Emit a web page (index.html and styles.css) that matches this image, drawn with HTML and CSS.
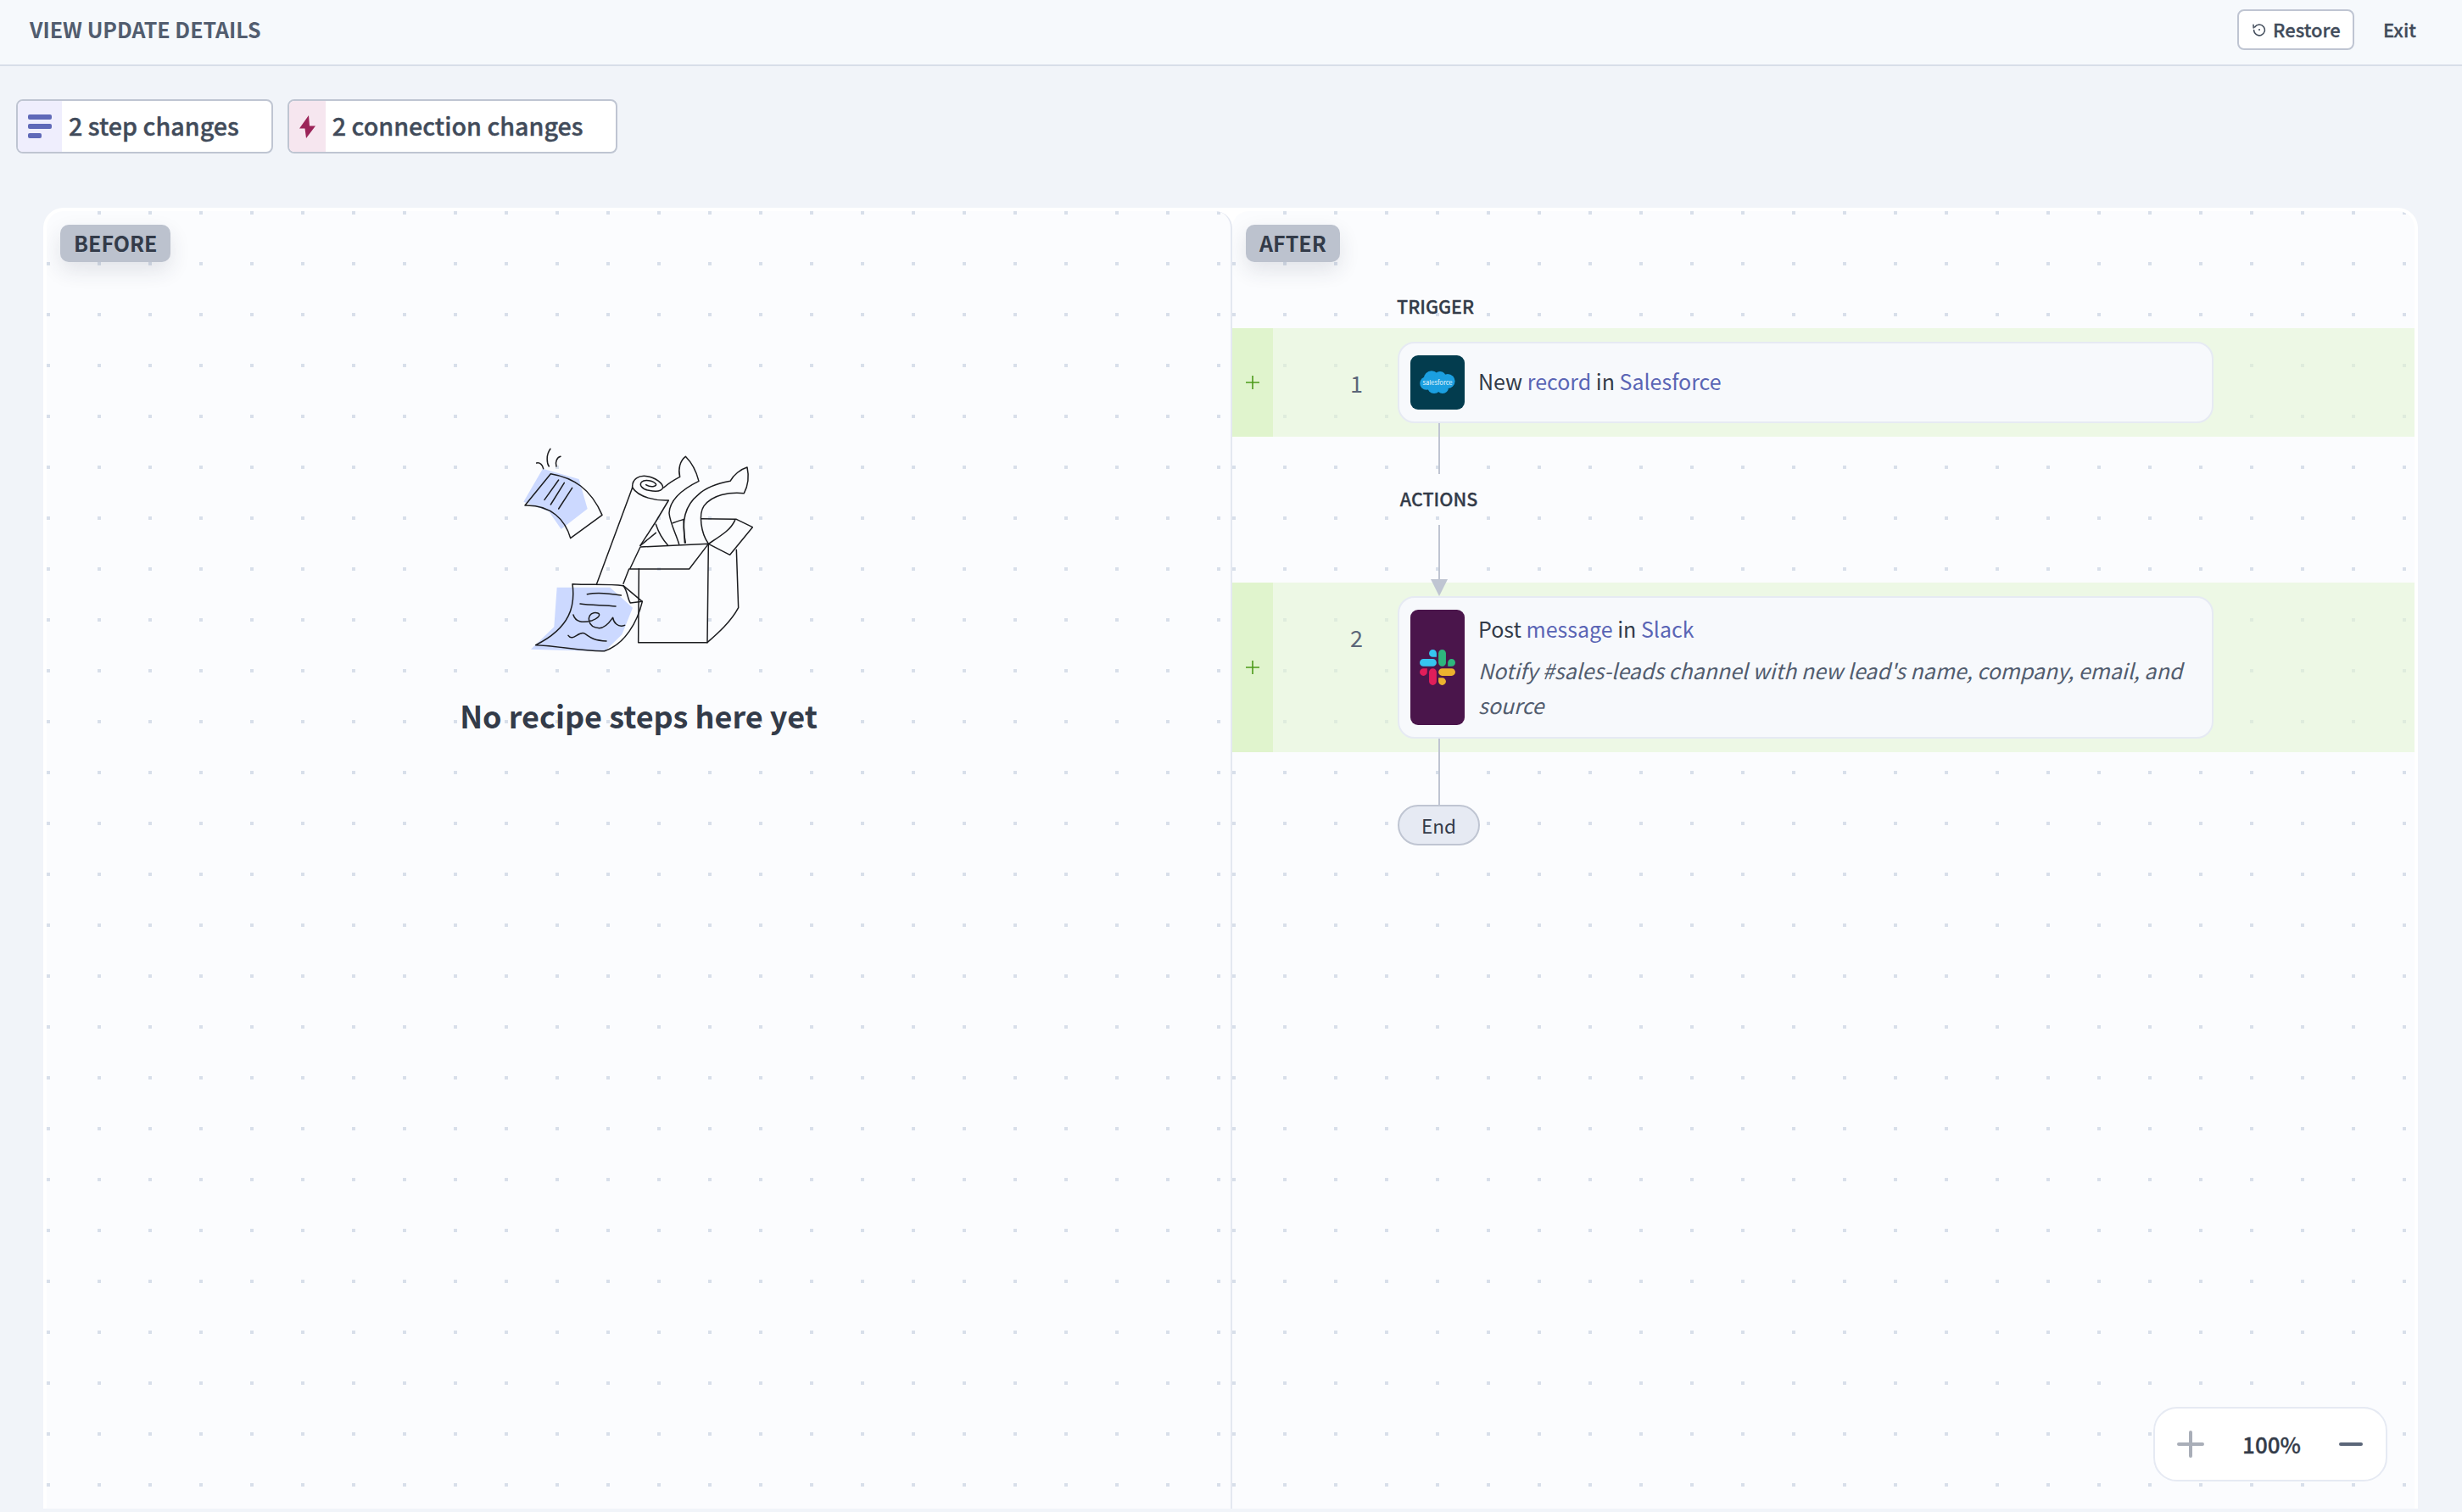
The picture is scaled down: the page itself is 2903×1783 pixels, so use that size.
FILE: index.html
```html
<!DOCTYPE html>
<html lang="en">
<head>
<meta charset="utf-8">
<title>View update details</title>
<link rel="stylesheet" href="styles.css">
</head>
<body>
<header class="topbar">
  <h1 class="topbar-title">VIEW UPDATE DETAILS</h1>
  <div class="topbar-actions">
    <button class="restore-btn">
      <svg class="restore-icon" viewBox="0 0 16 16" fill="none" stroke="#414b5a" stroke-width="1.5" stroke-linecap="round" stroke-linejoin="round"><path d="M2.6 5A6.4 6.4 0 1 1 1.6 8.6"/><path d="M1.2 5.9 L1 2.2"/><circle cx="8" cy="8" r="1" fill="#414b5a" stroke="none"/></svg>
      Restore
    </button>
    <span class="exit-link">Exit</span>
  </div>
</header>

<div class="summary">
  <div class="chip">
    <span class="chip-icon chip-icon-steps">
      <span class="bars"><i class="bar"></i><i class="bar"></i><i class="bar bar-short"></i></span>
    </span>
    <span class="chip-label">2 step changes</span>
  </div>
  <div class="chip">
    <span class="chip-icon chip-icon-conn">
      <svg class="bolt" viewBox="0 0 19 27"><path d="M11 0 L0 15.5 H6.5 L8 27 L19 12.5 H12 Z" fill="#9b2458"/></svg>
    </span>
    <span class="chip-label">2 connection changes</span>
  </div>
</div>

<main class="canvas">
  <section class="panel panel-before">
    <span class="badge">BEFORE</span>
    <div class="empty">
      <svg class="empty-art" viewBox="-21 0 1200 900" fill="none" stroke="#1c1d20" stroke-width="4.5" stroke-linecap="round" stroke-linejoin="round">
        <path d="M240 158 L368 195 L398 300 L305 372 L262 310 L172 275 Z" fill="#ccd9ff" stroke="none"/>
        <path d="M290 578 L478 578 L558 650 L520 745 L458 805 L198 797 L280 718 Z" fill="#ccd9ff" stroke="none"/>
        <path d="M268 176 C350 190 410 230 450 322 L338 404 C320 340 270 285 177 288 Z"/>
        <path d="M296 198 L246 268 M316 208 L268 285 M344 226 L296 300"/>
        <path d="M218 138 C230 135 240 145 242 158 M267 88 C250 110 255 140 262 150 M303 115 C290 118 283 135 288 150"/>
        <path d="M557 225 L430 568 M545 513 L525 565"/>
        <path d="M557 225 C555 195 580 180 610 185 C640 190 665 210 665 225 C660 240 640 240 615 235 C590 230 580 215 590 205 C600 195 630 200 640 212 C645 222 620 225 605 215"/>
        <path d="M557 225 C580 260 640 272 685 270 L640 345 L585 430"/>
        <path d="M668 225 C690 205 710 195 725 187 C718 160 725 130 745 115 C770 140 785 175 792 202 C745 225 690 260 687 315 C690 350 710 385 722 425"/>
        <path d="M640 355 C650 385 665 410 682 428 M585 430 L640 385 M700 350 C715 345 730 340 738 337 L742 420"/>
        <path d="M745 420 C730 350 740 290 790 250 C820 222 860 210 903 202 C915 180 940 160 963 153 C970 185 965 220 952 245 C900 240 840 250 810 290 C790 320 800 385 825 422"/>
        <path d="M580 512 L578 773 L822 773 L826 424"/>
        <path d="M585 435 L826 424 L758 513 L548 513 Z"/>
        <path d="M800 335 L925 337 L982 365 L902 463 L826 424 C870 395 905 375 920 340"/>
        <path d="M925 445 L932 650 C905 700 860 740 822 773"/>
        <path d="M345 566 C355 640 340 720 215 782 C300 785 380 805 458 803 C530 780 575 700 592 628 L525 572 C470 565 400 570 345 566 Z"/>
        <path d="M525 572 C540 590 540 620 550 633 L592 628"/>
        <path d="M397 602 C430 595 470 598 517 606 M372 636 C410 642 460 640 498 645"/>
        <path d="M348 675 C355 700 380 705 415 695 C450 680 445 665 420 668 C395 672 395 720 440 722 C470 720 485 685 488 685 C490 700 505 722 530 712"/>
        <path d="M330 748 C345 770 365 735 385 740 C405 750 410 765 465 768"/>
      </svg>
      <h2 class="empty-title">No recipe steps here yet</h2>
    </div>
  </section>

  <section class="panel panel-after">
    <span class="badge">AFTER</span>
    <div class="flow">
      <div class="flow-label flow-label-trigger">TRIGGER</div>

      <div class="row">
        <div class="row-mark"><svg class="plus" viewBox="0 0 16 16"><path d="M8 0 V16 M0 8 H16" stroke="#4c9a1a" stroke-width="1.6"/></svg></div>
        <div class="row-num">1</div>
        <div class="card">
          <span class="app app-sf">
            <svg class="sf-logo" viewBox="0 0 42 29">
              <g fill="#1b9fe0"><circle cx="14" cy="9.5" r="9.2"/><circle cx="24" cy="8" r="7"/><circle cx="33" cy="12.5" r="8.6"/><circle cx="8" cy="15" r="7.8"/><circle cx="17" cy="19" r="8"/><circle cx="27" cy="20" r="7"/></g>
              <text class="sf-word" x="21" y="17" text-anchor="middle">salesforce</text>
            </svg>
          </span>
          <div class="card-text card-text-center">
            <div class="card-title">New <span class="link">record</span> in <span class="link">Salesforce</span></div>
          </div>
        </div>
      </div>

      <div class="wire wire-a"></div>
      <div class="flow-label flow-label-actions">ACTIONS</div>
      <div class="wire-arrow">
        <div class="wire wire-b"></div>
        <svg class="arrowhead" viewBox="0 0 20 20"><path d="M0 0 H20 L10 20 Z" fill="#bfc5d2"/></svg>
      </div>

      <div class="row">
        <div class="row-mark"><svg class="plus" viewBox="0 0 16 16"><path d="M8 0 V16 M0 8 H16" stroke="#4c9a1a" stroke-width="1.6"/></svg></div>
        <div class="row-num">2</div>
        <div class="card">
          <span class="app app-slack">
            <svg class="slack-logo" viewBox="0 0 122.8 122.8">
              <path fill="#e01e5a" d="M25.8 77.6c0 7.1-5.8 12.9-12.9 12.9S0 84.7 0 77.6s5.8-12.9 12.9-12.9h12.9v12.9z"/>
              <path fill="#e01e5a" d="M32.3 77.6c0-7.1 5.8-12.9 12.9-12.9s12.9 5.8 12.9 12.9v32.3c0 7.1-5.8 12.9-12.9 12.9s-12.9-5.8-12.9-12.9V77.6z"/>
              <path fill="#36c5f0" d="M45.2 25.8c-7.1 0-12.9-5.8-12.9-12.9S38.1 0 45.2 0s12.9 5.8 12.9 12.9v12.9H45.2z"/>
              <path fill="#36c5f0" d="M45.2 32.3c7.1 0 12.9 5.8 12.9 12.9s-5.8 12.9-12.9 12.9H12.9C5.8 58.1 0 52.3 0 45.2s5.8-12.9 12.9-12.9h32.3z"/>
              <path fill="#2eb67d" d="M97 45.2c0-7.1 5.8-12.9 12.9-12.9s12.9 5.8 12.9 12.9-5.8 12.9-12.9 12.9H97V45.2z"/>
              <path fill="#2eb67d" d="M90.5 45.2c0 7.1-5.8 12.9-12.9 12.9s-12.9-5.8-12.9-12.9V12.9C64.7 5.8 70.5 0 77.6 0s12.9 5.8 12.9 12.9v32.3z"/>
              <path fill="#ecb22e" d="M77.6 97c7.1 0 12.9 5.8 12.9 12.9s-5.8 12.9-12.9 12.9-12.9-5.8-12.9-12.9V97h12.9z"/>
              <path fill="#ecb22e" d="M77.6 90.5c-7.1 0-12.9-5.8-12.9-12.9s5.8-12.9 12.9-12.9h32.3c7.1 0 12.9 5.8 12.9 12.9s-5.8 12.9-12.9 12.9H77.6z"/>
            </svg>
          </span>
          <div class="card-text card-text-top">
            <div class="card-title">Post <span class="link">message</span> in <span class="link">Slack</span></div>
            <div class="card-note">Notify #sales-leads channel with new lead's name, company, email, and source</div>
          </div>
        </div>
      </div>

      <div class="wire wire-c"></div>
      <div class="end-pill">End</div>
    </div>
  </section>

  <div class="zoom-box">
    <svg class="zoom-plus" viewBox="0 0 32 32"><path d="M16 2 V30 M2 16 H30" stroke="#a9aeb8" stroke-width="4" stroke-linecap="round"/></svg>
    <span class="zoom-value">100%</span>
    <svg class="zoom-minus" viewBox="0 0 28 4"><path d="M2 2 H26" stroke="#5b6679" stroke-width="4" stroke-linecap="round"/></svg>
  </div>
</main>
</body>
</html>
```
FILE: styles.css
```css
* { box-sizing: border-box; }
html, body { height: 100%; }
body {
  margin: 0;
  height: 100vh;
  overflow: hidden;
  display: flex;
  flex-direction: column;
  background: #f1f4f9;
  color: #333b49;
  font-family: "Noto Sans CJK SC", "Noto Sans", sans-serif;
}
.topbar {
  flex: none;
  height: 78px;
  display: flex;
  align-items: center;
  justify-content: space-between;
  padding: 0 54px 6px 35px;
  background: #f6f9fc;
  border-bottom: 2px solid #d8dee9;
}
.topbar-title {
  margin: 0;
  padding-bottom: 2px;
  font-size: 25px;
  line-height: 34px;
  font-weight: 700;
  color: #525d6f;
}
.topbar-actions { display: flex; align-items: center; gap: 34px; }
.restore-btn {
  display: flex;
  align-items: center;
  gap: 8px;
  height: 48px;
  width: 138px;
  padding: 0 0 3px 16px;
  background: #fff;
  border: 2px solid #bfc5d2;
  border-radius: 8px;
  font: 500 22px/30px "Noto Sans CJK SC", "Noto Sans", sans-serif;
  -webkit-text-stroke: .3px #414b5a;
  color: #414b5a;
}
.restore-icon { width: 16px; height: 16px; flex: none; margin-top: 3px; }
.exit-link {
  padding-bottom: 3px;
  font-size: 22px;
  line-height: 30px;
  font-weight: 500;
  -webkit-text-stroke: .3px #414b5a;
  color: #414b5a;
}

.summary {
  flex: none;
  display: flex;
  gap: 17px;
  padding: 39px 0 64px 19px;
}
.chip {
  display: flex;
  align-items: stretch;
  height: 64px;
  background: #fff;
  border: 2px solid #bfc5d2;
  border-radius: 8px;
  overflow: hidden;
}
.chip-icon { display: flex; align-items: center; justify-content: center; flex: none; }
.chip-icon-steps { width: 52px; background: #efeefd; }
.chip-icon-conn { width: 43px; background: #f6e6ef; }
.bars { display: flex; flex-direction: column; gap: 5px; width: 28px; }
.bar { display: block; height: 6px; border-radius: 2px; background: #5f69b8; }
.bar-short { width: 16px; }
.bolt { width: 19px; height: 27px; }
.chip-label {
  padding: 0 38px 0 8px;
  font-size: 28.7px;
  line-height: 58px;
  font-weight: 500;
  -webkit-text-stroke: .4px #414b5a;
  color: #414b5a;
}

.canvas {
  flex: 1;
  min-height: 0;
  position: relative;
  display: grid;
  grid-template-columns: 1398px 1394px;
  margin: 0 52px 4px 51px;
  padding: 4px 4px 0;
  background: #fff;
  border-radius: 24px 24px 0 0;
}
.panel {
  position: relative;
  overflow: hidden;
  background-color: #fbfcfe;
  background-image: conic-gradient(at 4px 4px, transparent 75%, #d8dfea 0);
  background-size: 60px 60px;
}
.panel-before { border-right: 2px solid #e4e8f1; border-radius: 20px 20px 0 0; }
.panel-after { border-radius: 20px 20px 0 0; }
.badge {
  position: absolute;
  top: 16px;
  left: 16px;
  height: 44px;
  padding: 0 16px;
  background: #bcc2ce;
  border-radius: 10px;
  box-shadow: 0 10px 24px rgba(40, 50, 70, .12);
  font-size: 25px;
  line-height: 42px;
  font-weight: 700;
  color: #333b49;
}

.empty { display: flex; flex-direction: column; align-items: center; padding-top: 251px; }
.empty-art { display: block; width: 400px; height: 300px; }
.empty-title {
  margin: 18px 0 0;
  font-size: 36px;
  line-height: 50px;
  font-weight: 700;
  color: #333b49;
}

.flow { padding-top: 96px; }
.flow-label {
  width: 97px;
  margin-left: 195px;
  font-size: 21.5px;
  font-weight: 500;
  white-space: nowrap;
  -webkit-text-stroke: .3px #333b49;
  color: #333b49;
}
.flow-label-trigger { line-height: 32px; margin-bottom: 10px; margin-left: 194px; }
.flow-label-actions { line-height: 58px; padding-bottom: 2px; text-align: center; }
.row {
  display: flex;
  background: rgba(229, 245, 212, .6);
  padding: 16px 237px 16px 0;
}
.row-mark {
  flex: none;
  width: 48px;
  margin: -16px 0;
  display: flex;
  align-items: center;
  justify-content: center;
  background: #e0f4cd;
}
.plus { width: 16px; height: 16px; }
.row-num {
  flex: none;
  width: 147px;
  padding: 29px 41px 0 0;
  text-align: right;
  font-size: 27px;
  line-height: 40px;
  color: #5b6679;
}
.card {
  flex: 1;
  display: flex;
  gap: 16px;
  padding: 14px 13px;
  background: #f7f9fc;
  border: 2px solid #e6eaf3;
  border-radius: 20px;
}
.app {
  flex: none;
  width: 64px;
  min-height: 64px;
  display: flex;
  align-items: center;
  justify-content: center;
  border-radius: 9px;
}
.app-sf { background: #033c4e; }
.app-slack { background: #4a154b; }
.sf-logo { width: 42px; height: 29px; }
.sf-word { font-size: 7.5px; fill: #e8f6fd; }
.slack-logo { width: 42px; height: 42px; }
.card-text { flex: 1; min-width: 0; }
.card-text-center { align-self: center; padding-bottom: 4px; }
.card-text-top { padding: 2px 0 3px; }
.card-title { font-size: 25px; line-height: 40px; color: #333b49; }
.link { color: #5a65b5; }
.card-note {
  margin-top: 9px;
  font-size: 25px;
  line-height: 41px;
  font-style: italic;
  color: #525d6f;
}
.wire { width: 2px; margin-left: 243px; background: #bfc5d2; position: relative; }
.wire-a { height: 60px; margin-top: -16px; }
.wire-arrow { position: relative; margin-bottom: -16px; }
.wire-b { height: 66px; }
.arrowhead { display: block; width: 20px; height: 20px; margin: -2px 0 0 234px; position: relative; }
.wire-c { height: 78px; margin-top: -16px; }
.end-pill {
  width: 97px;
  height: 48px;
  margin-left: 195px;
  border: 2px solid #bfc5d2;
  border-radius: 24px;
  background: #e6eaf3;
  text-align: center;
  font-size: 22.5px;
  line-height: 44px;
  color: #333b49;
}

.zoom-box {
  position: absolute;
  right: 36px;
  bottom: 32px;
  width: 276px;
  height: 88px;
  display: flex;
  align-items: center;
  padding: 0 27px 0 26px;
  background: #fff;
  border: 2px solid #e6eaf3;
  border-radius: 28px;
}
.zoom-plus { width: 32px; height: 32px; flex: none; }
.zoom-value {
  flex: 1;
  text-align: center;
  font-size: 26px;
  line-height: 36px;
  font-weight: 500;
  -webkit-text-stroke: .3px #333b49;
  color: #333b49;
}
.zoom-minus { width: 28px; height: 4px; flex: none; }
```
